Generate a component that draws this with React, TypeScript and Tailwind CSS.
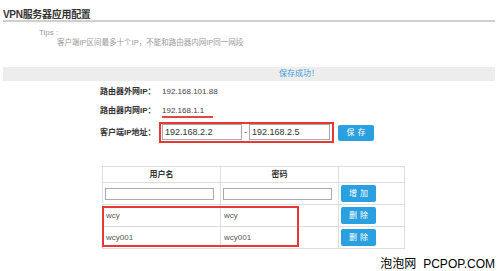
const users = [
  { name: "wcy", pass: "wcy" },
  { name: "wcy001", pass: "wcy001" },
];

const BlueButton = ({ label }: { label: string }) => (
  <button className="h-[16px] w-[36px] rounded-[2px] bg-[#2ba0e0] text-[8px] leading-[16px] tracking-[3px] text-white pl-[3px]">
    {label}
  </button>
);

export default function App() {
  return (
    <div className="w-[500px] h-[271px] overflow-hidden bg-white font-['Liberation_Sans','Noto_Sans_CJK_SC',sans-serif] text-[#444]">
      {/* title */}
      <div className="mx-[3px] mr-[5px] h-[22px] flex items-end border-b-2 border-[#cfcfcf]">
        <span className="text-[10px] leading-[10px] font-semibold text-[#333] tracking-[-0.3px]">
          VPN服务器应用配置
        </span>
      </div>

      {/* tips */}
      <div className="mt-[7px] pl-[39px] text-[8px] leading-[8px] text-[#999]">Tips :</div>
      <div className="mt-[2px] pl-[57px] text-[7.5px] leading-[8px] text-[#999]">
        客户端IP区间最多十个IP，不能和路由器内网IP同一网段
      </div>

      {/* message bar */}
      <div className="mt-[20px] ml-[3px] mr-[5px] h-[14px] bg-[#ededed] pl-[276px] text-[8px] leading-[14px] text-[#3a9fd9]">
        保存成功！
      </div>

      {/* form */}
      <div className="mt-[3px] pl-[100px] text-[8px]">
        <div className="flex h-[16px] items-center">
          <span className="w-[62px] font-bold text-[#333]">路由器外网IP：</span>
          <span>192.168.101.88</span>
        </div>
        <div className="flex h-[22px] items-center">
          <span className="w-[62px] font-bold text-[#333]">路由器内网IP：</span>
          <div className="flex flex-col pt-[3px]">
            <span className="leading-[8px]">192.168.1.1</span>
            <div className="mt-[1px] h-[1.5px] w-[51px] bg-[#e04848]" />
          </div>
        </div>
        <div className="flex h-[21px] items-center">
          <span className="w-[59px] font-bold text-[#333]">客户端IP地址：</span>
          <div className="flex h-[21px] items-start border-2 border-[#e53935] pl-[1px] pr-[2px]">
            <input
              readOnly
              value="192.168.2.2"
              className="h-[16px] w-[80px] border border-[#aaa] bg-white pl-[2px] text-[9px] text-[#333] outline-none"
            />
            <span className="w-[7px] text-center text-[9px] leading-[16px] text-[#666]">-</span>
            <input
              readOnly
              value="192.168.2.5"
              className="h-[16px] w-[81px] border border-[#aaa] bg-white pl-[2px] text-[9px] text-[#333] outline-none"
            />
          </div>
          <div className="ml-[4px] flex items-center">
            <BlueButton label="保存" />
          </div>
        </div>
      </div>

      {/* user table */}
      <div className="relative ml-[102px] mt-[23px] w-[303px]">
        <table className="w-[303px] border-collapse text-[8px]">
          <thead>
            <tr className="h-[16px]">
              <th className="w-[118px] border border-[#dedede] font-bold text-[#333]">用户名</th>
              <th className="w-[118px] border border-[#dedede] font-bold text-[#333]">密码</th>
              <th className="border border-[#dedede]" />
            </tr>
          </thead>
          <tbody>
            <tr className="h-[22px]">
              <td className="border border-[#dedede] pl-[2px]">
                <input readOnly className="block h-[12px] w-[109px] border border-[#aaa] bg-white outline-none" />
              </td>
              <td className="border border-[#dedede] pl-[2px]">
                <input readOnly className="block h-[12px] w-[109px] border border-[#aaa] bg-white outline-none" />
              </td>
              <td className="border border-[#dedede] pl-[2px]">
                <div className="flex h-[17px] w-[35px] items-center justify-center rounded-[2px] bg-[#2ba0e0] text-[8px] tracking-[3px] text-white pl-[3px]">增加</div>
              </td>
            </tr>
            {users.map((u) => (
              <tr key={u.name} className="h-[22px]">
                <td className="border border-[#dedede] pl-[3px] text-[#555]">{u.name}</td>
                <td className="border border-[#dedede] pl-[3px] text-[#555]">{u.pass}</td>
                <td className="border border-[#dedede] pl-[2px]">
                  <div className="flex h-[17px] w-[35px] items-center justify-center rounded-[2px] bg-[#2ba0e0] text-[8px] tracking-[3px] text-white pl-[3px]">删除</div>
                </td>
              </tr>
            ))}
          </tbody>
        </table>
        <div className="absolute left-0 top-[40px] h-[41px] w-[197px] border-2 border-[#e53935]" />
      </div>

      {/* watermark */}
      <div className="mt-[9px] flex justify-end pr-[5px] text-[12px] leading-[12px] text-black">
        <span>泡泡网</span>
        <span className="ml-[7px]">PCPOP.COM</span>
      </div>
    </div>
  );
}
